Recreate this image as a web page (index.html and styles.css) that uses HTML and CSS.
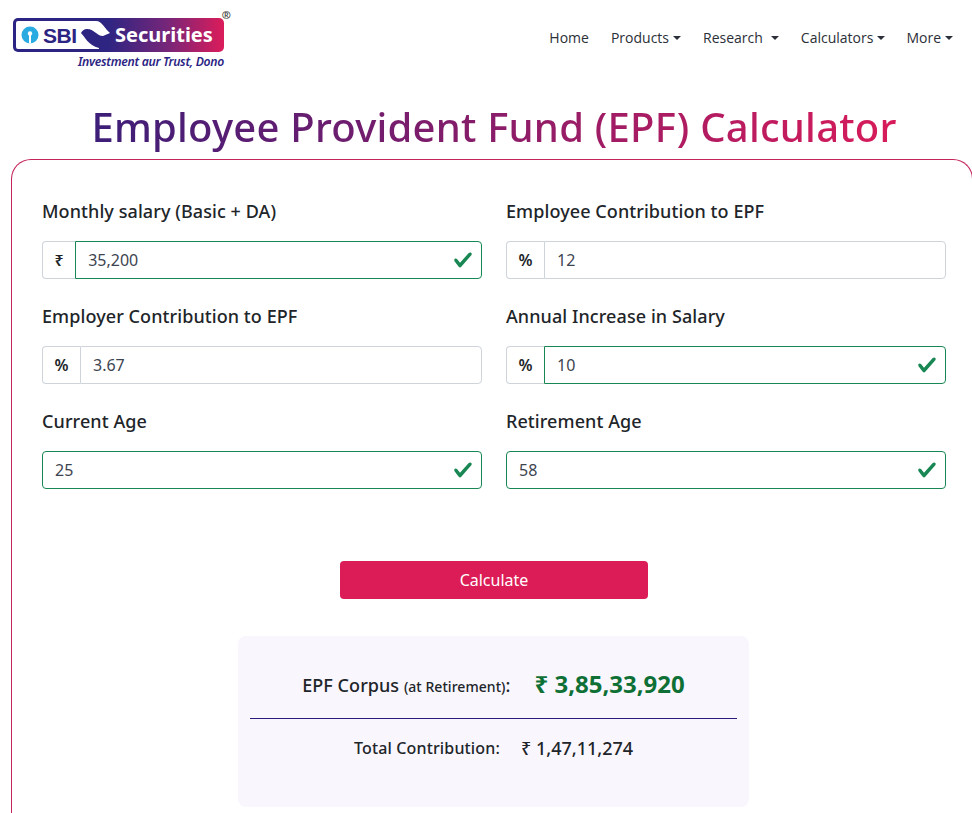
FILE: index.html
```html
<!DOCTYPE html>
<html lang="en">
<head>
    <meta charset="UTF-8">
    <meta name="viewport" content="width=device-width, initial-scale=1.0">
    <title>Employee Provident Fund (EPF) Calculator</title>
    <link rel="stylesheet" href="styles.css">
</head>
<body>
    <header class="topbar">
        <a class="brand" href="#">
            <svg class="brand-plate" viewBox="0 0 211 34" width="211" height="34">
                <defs>
                    <linearGradient id="plate-fill" x1="0" y1="0" x2="1" y2="0">
                        <stop offset="0" stop-color="#2c2483"/>
                        <stop offset="0.45" stop-color="#2e2582"/>
                        <stop offset="0.72" stop-color="#73267a"/>
                        <stop offset="1" stop-color="#dc1c5a"/>
                    </linearGradient>
                </defs>
                <rect width="211" height="34" rx="5" fill="url(#plate-fill)"/>
                <path d="M5 3 H83 C89 3 92 11 97 15 L90 18 C84 18 81 11 74 11 C71 11 69 13 68 15 C72 19 75 27 86 30 L86 31 H5 A2 2 0 0 1 3 29 V5 A2 2 0 0 1 5 3 Z" fill="#fff"/>
                <circle cx="17" cy="17" r="8.5" fill="#29abe2"/>
                <circle cx="17" cy="15.5" r="2.2" fill="#fff"/>
                <rect x="16" y="16" width="2" height="9.5" fill="#fff"/>
                <text class="logo-sbi" x="30" y="24.5">SBI</text>
                <text class="logo-name" x="102" y="24">Securities</text>
            </svg>
            <span class="brand-reg">®</span>
            <span class="brand-tag">Investment aur Trust, Dono</span>
        </a>
        <nav class="nav">
            <a class="nav-link" href="#">Home</a>
            <a class="nav-link caret" href="#">Products</a>
            <a class="nav-link caret wide-caret" href="#">Research</a>
            <a class="nav-link caret" href="#">Calculators</a>
            <a class="nav-link caret" href="#">More</a>
        </nav>
    </header>

    <h1 class="page-title"><span>Employee Provident Fund (EPF) Calculator</span></h1>

    <main class="calc-card">
        <form class="calc-form">
            <div class="field">
                <label class="field-label">Monthly salary (Basic + DA)</label>
                <div class="input-group">
                    <span class="addon">₹</span>
                    <div class="input valid"><span>35,200</span></div>
                </div>
            </div>
            <div class="field">
                <label class="field-label">Employee Contribution to EPF</label>
                <div class="input-group">
                    <span class="addon">%</span>
                    <div class="input"><span>12</span></div>
                </div>
            </div>
            <div class="field">
                <label class="field-label">Employer Contribution to EPF</label>
                <div class="input-group">
                    <span class="addon">%</span>
                    <div class="input"><span>3.67</span></div>
                </div>
            </div>
            <div class="field">
                <label class="field-label">Annual Increase in Salary</label>
                <div class="input-group">
                    <span class="addon">%</span>
                    <div class="input valid"><span>10</span></div>
                </div>
            </div>
            <div class="field">
                <label class="field-label">Current Age</label>
                <div class="input-group">
                    <div class="input valid solo"><span>25</span></div>
                </div>
            </div>
            <div class="field">
                <label class="field-label">Retirement Age</label>
                <div class="input-group">
                    <div class="input valid solo"><span>58</span></div>
                </div>
            </div>
        </form>

        <div class="actions">
            <button class="btn-calc" type="button">Calculate</button>
        </div>

        <section class="result">
            <div class="result-main">
                <span class="result-label">EPF Corpus <small>(at Retirement)</small>:</span>
                <span class="result-value">₹ 3,85,33,920</span>
            </div>
            <div class="result-sub">
                <span class="sub-label">Total Contribution:</span>
                <span class="sub-value">₹ 1,47,11,274</span>
            </div>
        </section>
    </main>
</body>
</html>
```

FILE: styles.css
```css
html, body {
    height: 813px;
    overflow: hidden;
}
body {
    margin: 0;
    background: #fff;
    color: #212529;
    font-family: "Noto Sans", "Open Sans", sans-serif;
}
a {
    color: inherit;
    text-decoration: none;
}

/* Header */
.topbar {
    display: flex;
    justify-content: space-between;
    height: 76px;
    padding: 0 19px 0 13px;
}
.brand {
    position: relative;
    display: block;
    width: 211px;
    padding-top: 18px;
}
.brand-plate {
    display: block;
}
.logo-sbi {
    fill: #2c2483;
    font-family: "Liberation Sans", sans-serif;
    font-size: 21px;
    font-weight: 700;
    letter-spacing: -0.5px;
}
.logo-name {
    fill: #fff;
    font-family: "Noto Sans", sans-serif;
    font-size: 20px;
    font-weight: 700;
}
.brand-reg {
    position: absolute;
    top: 9px;
    right: -7px;
    font-size: 11px;
    font-weight: 700;
    line-height: 12px;
    color: #444;
}
.brand-tag {
    display: block;
    margin-top: 2px;
    text-align: right;
    color: #2c2483;
    font-size: 12.2px;
    font-style: italic;
    font-weight: 600;
    letter-spacing: -0.3px;
    line-height: 16px;
}
.nav {
    display: flex;
    gap: 22px;
    padding-top: 27px;
    font-family: "Open Sans", sans-serif;
    font-size: 14px;
    line-height: 21px;
}
.nav-link {
    color: #2b2f38;
}
.nav-link:last-child {
    margin-left: -1px;
}
.caret::after {
    content: "";
    display: inline-block;
    margin-left: 4px;
    vertical-align: 3px;
    border-top: 4px solid currentColor;
    border-left: 4px solid transparent;
    border-right: 4px solid transparent;
}
.wide-caret::after {
    margin-left: 8px;
}

/* Title */
.page-title {
    margin: 0;
    height: 83px;
    padding: 24px 0 0 16px;
    box-sizing: border-box;
    text-align: center;
    font-size: 40px;
    font-weight: 500;
    letter-spacing: 0.23px;
    line-height: 54px;
}
.page-title span {
    background: linear-gradient(90deg, #3c1e78 0%, #d81b5a 100%);
    -webkit-background-clip: text;
    background-clip: text;
    color: transparent;
}

/* Card */
.calc-card {
    box-sizing: border-box;
    width: 962px;
    height: 680px;
    margin-left: 11px;
    padding: 39px 26px 0 30px;
    border: 1px solid #c4235c;
    border-bottom-color: transparent;
    border-radius: 20px 20px 0 0;
}
.calc-form {
    display: grid;
    grid-template-columns: 440px 440px;
    column-gap: 24px;
    row-gap: 25px;
}
.field-label {
    display: block;
    margin-bottom: 18px;
    font-size: 18px;
    font-weight: 500;
    letter-spacing: 0.08px;
    line-height: 24px;
    color: #212529;
}
.input-group {
    display: flex;
    height: 38px;
}
.addon {
    display: flex;
    align-items: center;
    padding: 0 11.5px;
    font-size: 16px;
    font-weight: 600;
    border: 1px solid #ced4da;
    border-right: 0;
    border-radius: 4px 0 0 4px;
}
.input {
    flex: 1;
    display: flex;
    align-items: center;
    padding: 0 12px;
    font-size: 16px;
    color: #3d4450;
    border: 1px solid #ced4da;
    border-radius: 0 4px 4px 0;
}
.input.valid {
    border-color: #198754;
    background: no-repeat right 8px center / 20px 20px url("data:image/svg+xml,%3Csvg xmlns='http://www.w3.org/2000/svg' viewBox='0 0 8 8'%3E%3Cpath fill='%23198754' d='M2.3 6.73.6 4.53c-.4-1.04.46-1.4 1.1-.8l1.1 1.4 3.4-3.8c.6-.63 1.6-.27 1.2.7l-4 4.6c-.43.5-.8.4-1.1.1z'/%3E%3C/svg%3E");
}
.input.solo {
    border-radius: 4px;
}

/* Button */
.actions {
    display: flex;
    justify-content: center;
    margin-top: 72px;
}
.btn-calc {
    width: 308px;
    height: 38px;
    border: 0;
    border-radius: 4px;
    background: #dc1c56;
    color: #fff;
    font-family: "Noto Sans", sans-serif;
    font-size: 16px;
}

/* Result */
.result {
    box-sizing: border-box;
    width: 511px;
    height: 171px;
    margin: 37px 0 0 196px;
    padding: 0 12px;
    background: #f9f6fe;
    border-radius: 8px;
}
.result-main {
    display: flex;
    justify-content: center;
    align-items: center;
    gap: 24px;
    height: 66px;
    padding-top: 16px;
    border-bottom: 1px solid #2c1a7d;
}
.result-label {
    font-size: 18px;
    font-weight: 500;
    letter-spacing: 0.05px;
}
.result-label small {
    font-size: 14px;
}
.result-value {
    margin-bottom: 3px;
    color: #0e7035;
    font-size: 24px;
    font-weight: 700;
}
.result-sub {
    display: flex;
    justify-content: center;
    align-items: center;
    gap: 21px;
    height: 58px;
}
.sub-label {
    font-size: 16px;
    font-weight: 500;
    letter-spacing: 0.15px;
}
.sub-value {
    font-size: 18px;
    font-weight: 500;
}
```
